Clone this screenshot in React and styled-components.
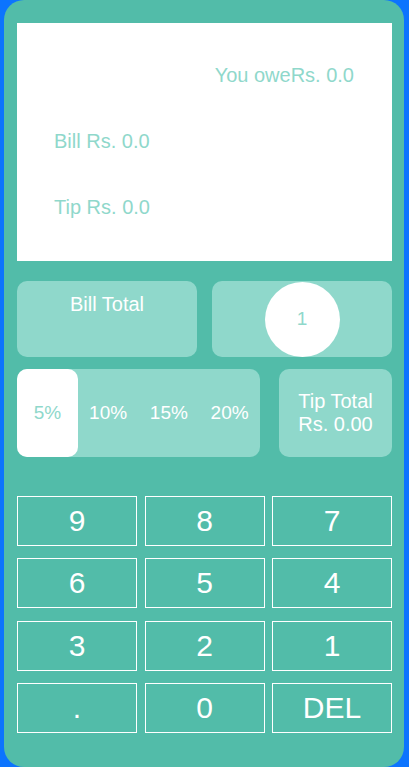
import React from 'react';
import styled, { createGlobalStyle } from 'styled-components';

const GlobalStyle = createGlobalStyle`
  * { box-sizing: border-box; }
  body {
    margin: 0;
    background: #0c74fe;
    font-family: "Liberation Sans", Arial, sans-serif;
  }
`;

const Phone = styled.div`
  width: 400px;
  height: 767px;
  margin-left: 4px;
  background: #52bca9;
  border-radius: 20px;
  padding: 23px 12px 0 13px;
  display: flex;
  flex-direction: column;
`;

const Display = styled.div`
  height: 238px;
  background: #fff;
  color: #8fd8cb;
  font-size: 20px;
  line-height: 21px;
  padding: 42px 38px 0 37px;
  display: flex;
  flex-direction: column;
  gap: 45px;
`;

const DisplayLine = styled.div`
  text-align: ${props => (props.right ? 'right' : 'left')};
`;

const Row = styled.div`
  display: flex;
  gap: ${props => props.gap}px;
  margin-top: ${props => props.top}px;
`;

const Card = styled.div`
  flex: 1;
  height: ${props => props.h}px;
  background: #8fd8cb;
  border-radius: 10px;
  color: #fff;
  font-size: 20px;
  display: flex;
  flex-direction: column;
  align-items: center;
  justify-content: ${props => (props.center ? 'center' : 'flex-start')};
  text-align: center;
`;

const CardLabel = styled.div`
  margin-top: 13px;
  line-height: 21px;
`;

const Counter = styled.div`
  width: 75px;
  height: 75px;
  border-radius: 50%;
  background: #fff;
  color: #8fd8cb;
  font-size: 19px;
  display: flex;
  align-items: center;
  justify-content: center;
`;

const Percents = styled.div`
  width: 243px;
  height: 88px;
  background: #8fd8cb;
  border-radius: 10px;
  display: flex;
`;

const Percent = styled.div`
  flex: 1;
  display: flex;
  align-items: center;
  justify-content: center;
  border-radius: 10px;
  font-size: 19px;
  background: ${props => (props.active ? '#fff' : 'transparent')};
  color: ${props => (props.active ? '#8fd8cb' : '#fff')};
`;

const TipText = styled.div`
  line-height: 23px;
`;

const Keypad = styled.div`
  margin-top: 39px;
  display: grid;
  grid-template-columns: repeat(3, 120px);
  column-gap: 7.5px;
  row-gap: 12.4px;
`;

const Key = styled.div`
  height: 50px;
  border: 1px solid #fff;
  color: #fff;
  font-size: 30px;
  display: flex;
  align-items: center;
  justify-content: center;
`;

const keys = ['9', '8', '7', '6', '5', '4', '3', '2', '1', '.', '0', 'DEL'];

export default function App() {
  return (
    <>
      <GlobalStyle />
      <Phone>
        <Display>
          <DisplayLine right>You oweRs. 0.0</DisplayLine>
          <DisplayLine>Bill Rs. 0.0</DisplayLine>
          <DisplayLine>Tip Rs. 0.0</DisplayLine>
        </Display>
        <Row gap={15} top={20}>
          <Card h={76}>
            <CardLabel>Bill Total</CardLabel>
          </Card>
          <Card h={76} center>
            <Counter>1</Counter>
          </Card>
        </Row>
        <Row gap={19} top={12}>
          <Percents>
            <Percent active>5%</Percent>
            <Percent>10%</Percent>
            <Percent>15%</Percent>
            <Percent>20%</Percent>
          </Percents>
          <Card h={88} center>
            <TipText>Tip Total</TipText>
            <TipText>Rs. 0.00</TipText>
          </Card>
        </Row>
        <Keypad>
          {keys.map(k => (
            <Key key={k}>{k}</Key>
          ))}
        </Keypad>
      </Phone>
    </>
  );
}
